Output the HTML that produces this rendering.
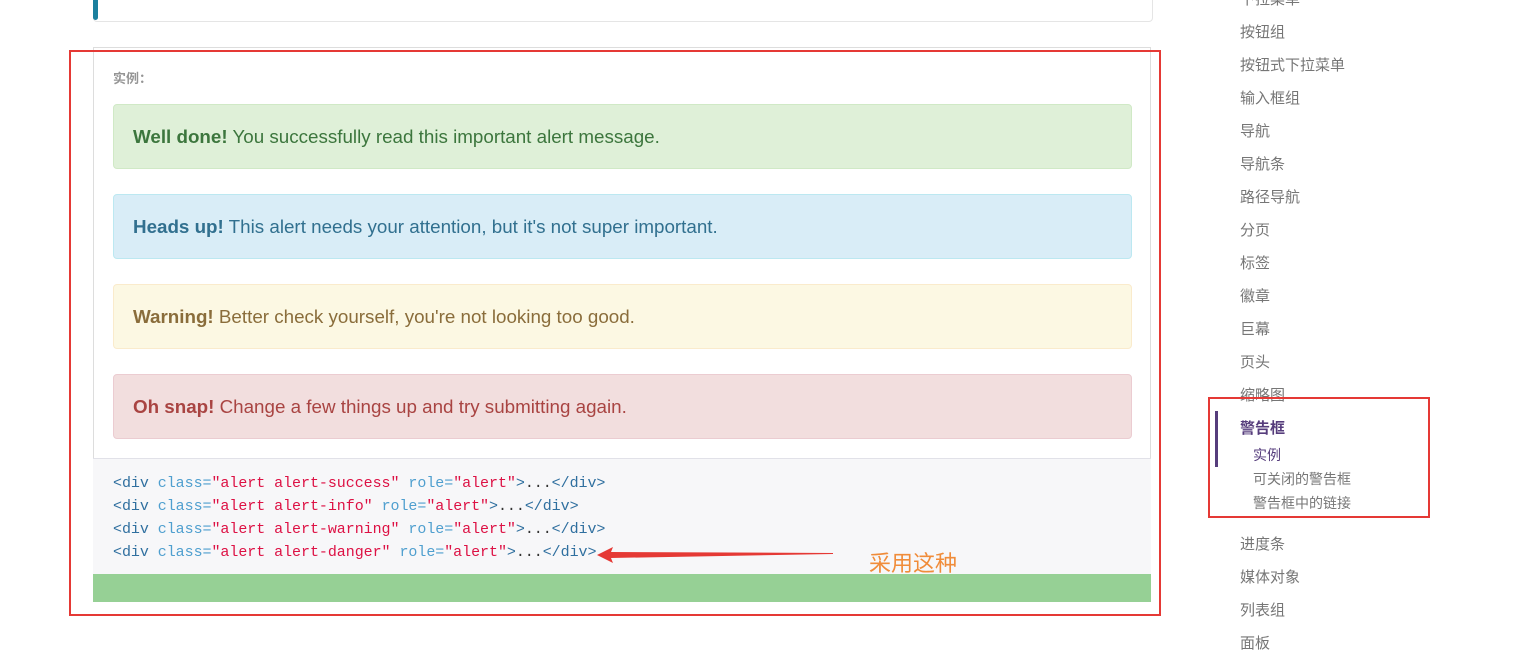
<!DOCTYPE html>
<html><head><meta charset="utf-8"><style>
body{margin:0;width:1516px;height:646px;background:#fff;position:relative;overflow:hidden;font-family:"Liberation Sans","Noto Sans CJK SC",sans-serif}
.abs{position:absolute}
.alert{position:absolute;left:113px;width:1019px;height:65px;border:1px solid;border-radius:4px;box-sizing:border-box;font-size:18.8px;line-height:63px;padding-left:19px}
.code{font-family:"Liberation Mono","DejaVu Sans Mono",monospace;font-size:15px;color:#333;position:absolute;left:113px;letter-spacing:-0.05px}
.t{color:#2f6f9f}.a{color:#4f9fcf}.s{color:#d14}
.nav{position:absolute;left:1240px;font-size:15px;color:#767676}
</style></head><body>
<div class="abs" style="left:93px;top:-10px;width:1058px;height:30px;border:1px solid #e5e5e5;border-radius:4px"></div>
<div class="abs" style="left:93px;top:-10px;width:5px;height:30px;background:#1b809e;border-radius:3px"></div>
<div class="abs" style="left:93px;top:47px;width:1058px;height:555px;border:1px solid #ddd;box-sizing:border-box"></div>
<div class="abs" style="left:113px;top:68px;font-size:13px;font-weight:bold;color:#959595">实例：</div>
<div class="alert" style="top:104px;background:#dff0d8;border-color:#d0e9c6;color:#3c763d"><b>Well done!</b> You successfully read this important alert message.</div>
<div class="alert" style="top:194px;background:#d9edf7;border-color:#bce8f1;color:#31708f"><b>Heads up!</b> This alert needs your attention, but it's not super important.</div>
<div class="alert" style="top:284px;background:#fcf8e3;border-color:#faebcc;color:#8a6d3b"><b>Warning!</b> Better check yourself, you're not looking too good.</div>
<div class="alert" style="top:374px;background:#f2dede;border-color:#ebccd1;color:#a94442"><b>Oh snap!</b> Change a few things up and try submitting again.</div>
<div class="abs" style="left:93px;top:458px;width:1058px;height:116px;background:#f7f7f9;border-top:1px solid #e1e1e8"></div>
<div class="code" style="top:475px"><span class="t">&lt;div</span> <span class="a">class=</span><span class="s">"alert alert-success"</span> <span class="a">role=</span><span class="s">"alert"</span><span class="t">&gt;</span>...<span class="t">&lt;/div&gt;</span></div>
<div class="code" style="top:498px"><span class="t">&lt;div</span> <span class="a">class=</span><span class="s">"alert alert-info"</span> <span class="a">role=</span><span class="s">"alert"</span><span class="t">&gt;</span>...<span class="t">&lt;/div&gt;</span></div>
<div class="code" style="top:521px"><span class="t">&lt;div</span> <span class="a">class=</span><span class="s">"alert alert-warning"</span> <span class="a">role=</span><span class="s">"alert"</span><span class="t">&gt;</span>...<span class="t">&lt;/div&gt;</span></div>
<div class="code" style="top:544px"><span class="t">&lt;div</span> <span class="a">class=</span><span class="s">"alert alert-danger"</span> <span class="a">role=</span><span class="s">"alert"</span><span class="t">&gt;</span>...<span class="t">&lt;/div&gt;</span></div>
<div class="abs" style="left:93px;top:574px;width:1058px;height:28px;background:#96d095"></div>
<div class="abs" style="left:69px;top:50px;width:1092px;height:566px;border:2px solid #e53935;box-sizing:border-box"></div>
<svg class="abs" style="left:595px;top:545px" width="240" height="20"><polygon points="2,10 18,2 16,7 238,8 238,9 16,13 18,18" fill="#e53935"/></svg>
<div class="abs" style="left:869px;top:546px;font-size:22px;color:#f08c3a">采用这种</div>
<div class="nav" style="top:-12px">下拉菜单</div>
<div class="nav" style="top:21px">按钮组</div>
<div class="nav" style="top:54px">按钮式下拉菜单</div>
<div class="nav" style="top:87px">输入框组</div>
<div class="nav" style="top:120px">导航</div>
<div class="nav" style="top:153px">导航条</div>
<div class="nav" style="top:186px">路径导航</div>
<div class="nav" style="top:219px">分页</div>
<div class="nav" style="top:252px">标签</div>
<div class="nav" style="top:285px">徽章</div>
<div class="nav" style="top:318px">巨幕</div>
<div class="nav" style="top:351px">页头</div>
<div class="nav" style="top:384px">缩略图</div>
<div class="abs" style="left:1215px;top:411px;width:3px;height:56px;background:#563d7c"></div>
<div class="nav" style="top:417px;color:#563d7c;font-weight:bold">警告框</div>
<div class="nav" style="left:1253px;top:445px;font-size:14px;color:#563d7c">实例</div>
<div class="nav" style="left:1253px;top:469px;font-size:14px">可关闭的警告框</div>
<div class="nav" style="left:1253px;top:493px;font-size:14px">警告框中的链接</div>
<div class="abs" style="left:1208px;top:397px;width:222px;height:121px;border:2px solid #e53935;box-sizing:border-box"></div>
<div class="nav" style="top:533px">进度条</div>
<div class="nav" style="top:566px">媒体对象</div>
<div class="nav" style="top:599px">列表组</div>
<div class="nav" style="top:632px">面板</div>
</body></html>
